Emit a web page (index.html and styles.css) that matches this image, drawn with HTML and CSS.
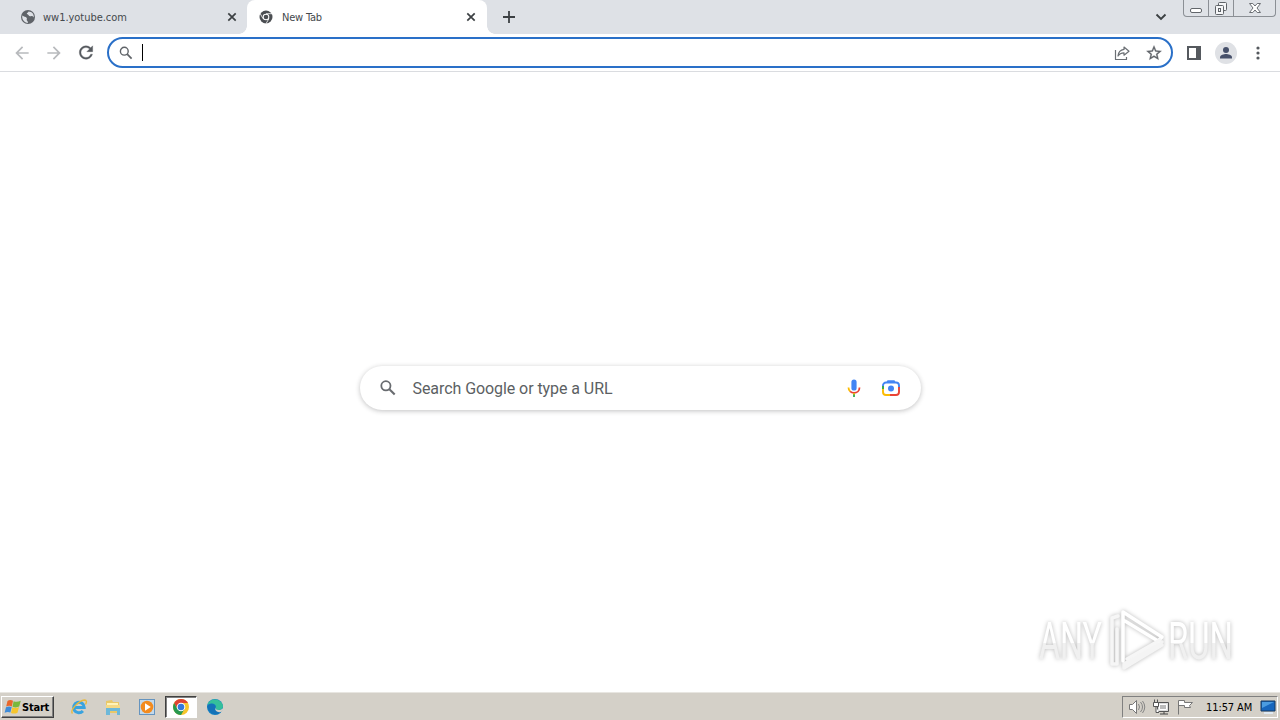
FILE: index.html
```html
<!DOCTYPE html>
<html lang="en">
<head>
    <meta charset="UTF-8">
    <meta name="viewport" content="width=device-width, initial-scale=1.0">
    <title>New Tab</title>
    <link rel="stylesheet" href="styles.css">
</head>
<body>
    <div class="tab-strip">
        <div class="tab">
            <svg class="favicon" width="16" height="16" viewBox="0 0 16 16">
                <circle cx="8" cy="8" r="7" fill="#5f6368"/>
                <path d="M2.3 6.6c1.8 1.5 3.2.8 4.3 2.2.9 1.1-.3 1.7.2 2.5.4.7 1.2.8 1.1 2.6C4.300 13.900 1.600 10.500 2.300 6.600zM8.500 2.400c-.2 1.200-1.700 1.100-1.700 2.200 0 1 1.400.7 1.800 1.700.4.900 1.300 1.300 2.500.9 1-.3 1.600.2 2.600 1.300.5-3.200-1.700-6.100-5.200-6.100z" fill="#dee1e6"/>
            </svg>
            <span class="tab-title tab-site">ww1.yotube.com</span>
            <svg class="tab-close" width="10" height="10" viewBox="0 0 10 10"><path d="M1.300 1.300l7.400 7.400M8.700 1.300l-7.400 7.400" stroke="#3c4043" stroke-width="1.700"/></svg>
        </div>
        <div class="tab active">
            <svg class="favicon" width="16" height="16" viewBox="0 0 16 16">
                <circle cx="8" cy="8" r="6.500" fill="#4b4e52"/>
                <path d="M8 4.700h6M5.100 9.700L2.100 4.500M10.900 9.700l-3 5.200" stroke="#fff" stroke-width=".8"/>
                <circle cx="8" cy="8" r="3.300" fill="#fff"/>
                <circle cx="8" cy="8" r="2.300" fill="#4b4e52"/>
            </svg>
            <span class="tab-title tab-new">New Tab</span>
            <svg class="tab-close" width="10" height="10" viewBox="0 0 10 10"><path d="M1.300 1.300l7.400 7.400M8.700 1.300l-7.400 7.400" stroke="#3c4043" stroke-width="1.700"/></svg>
        </div>
        <svg class="new-tab" width="12" height="12" viewBox="0 0 12 12"><path d="M6 0v12M0 6h12" stroke="#3c4043" stroke-width="1.800"/></svg>
        <svg class="tab-search" width="12" height="8" viewBox="0 0 12 8"><path d="M1.500 1.500L6 6l4.500-4.500" fill="none" stroke="#3c4043" stroke-width="1.900"/></svg>
        <div class="window-buttons">
            <span class="win-btn">
                <svg width="14" height="16" viewBox="0 0 14 16"><rect x="1.500" y="8.500" width="11" height="4" rx="1.500" fill="#fff" stroke="#62666b"/></svg>
            </span>
            <span class="win-btn">
                <svg width="14" height="16" viewBox="0 0 14 16"><g fill="#f5f6f8" stroke="#5f6368"><rect x="4.500" y="2.500" width="8" height="8" rx="1"/><rect x="1.500" y="5.500" width="8" height="9" rx="1"/><rect x="4.500" y="8.500" width="2" height="3"/></g></svg>
            </span>
            <span class="win-btn win-close">
                <svg width="14" height="16" viewBox="0 0 14 16"><path d="M1.500 3.500h3.300L7 6l2.200-2.500h3.300L9 8l3.500 4.500H9.200L7 10l-2.200 2.500H1.500L5 8z" fill="#fff" stroke="#6b6f74"/></svg>
            </span>
        </div>
    </div>

    <div class="toolbar">
        <svg class="nav-btn disabled" width="20" height="20" viewBox="0 0 24 24"><path d="M20 11H7.830l5.590-5.590L12 4l-8 8 8 8 1.410-1.410L7.830 13H20v-2z"/></svg>
        <svg class="nav-btn disabled" width="20" height="20" viewBox="0 0 24 24"><path d="M12 4l-1.410 1.410L16.170 11H4v2h12.170l-5.580 5.590L12 20l8-8z"/></svg>
        <svg class="nav-btn reload" width="20" height="21" viewBox="0 0 24 24"><path d="M17.650 6.350C16.200 4.900 14.210 4 12 4c-4.420 0-7.990 3.580-7.990 8s3.570 8 7.990 8c3.730 0 6.840-2.550 7.730-6h-2.080c-.82 2.330-3.040 4-5.650 4-3.310 0-6-2.690-6-6s2.690-6 6-6c1.660 0 3.140.69 4.220 1.780L13 11h7V4l-2.350 2.350z"/></svg>
        <div class="omnibox">
            <svg width="16" height="16" viewBox="0 0 16 16"><circle cx="6.300" cy="6.200" r="3.900" fill="none" stroke="#5f6368" stroke-width="1.400"/><path d="M9.200 9.100l4.400 4.500" stroke="#5f6368" stroke-width="1.700"/></svg>
            <span class="caret"></span>
            <svg class="share" width="16" height="16" viewBox="0 0 16 16"><path d="M1.500 5v9.500h11V12M10 2l5 4.200-5 4V7.800C7 7.800 5.300 8.700 4 11c.3-3.500 2.300-6.100 6-6.600z" fill="none" stroke="#6b6f74" stroke-width="1.200" stroke-linejoin="round"/></svg>
            <svg width="18" height="18" viewBox="0 0 24 24"><path d="M22 9.240l-7.190-.62L12 2 9.190 8.630 2 9.240l5.460 4.730L5.820 21 12 17.270 18.180 21l-1.630-7.030L22 9.240zM12 15.400l-3.760 2.270 1-4.280-3.320-2.880 4.380-.38L12 6.100l1.710 4.040 4.380.38-3.320 2.880 1 4.280L12 15.400z" fill="#5f6368" stroke="#5f6368" stroke-width=".4"/></svg>
        </div>
        <svg class="side-panel" width="14" height="14" viewBox="0 0 14 14"><path d="M0 0h14v14H0zM2 2v10h7V2z" fill="#55595e" fill-rule="evenodd"/></svg>
        <svg class="avatar" width="22" height="22" viewBox="0 0 22 22"><circle cx="11" cy="11" r="11" fill="#dfe1e5"/><circle cx="11" cy="8" r="3" fill="#46506a"/><path d="M5 16.500v-1.300c0-2 4-3.100 6-3.100s6 1.100 6 3.100v1.300z" fill="#46506a"/></svg>
        <svg class="menu" width="4" height="14" viewBox="0 0 4 14"><g fill="#55595e"><circle cx="2" cy="2" r="1.600"/><circle cx="2" cy="7" r="1.600"/><circle cx="2" cy="12" r="1.600"/></g></svg>
    </div>

    <div class="page">
        <div class="search-box">
            <svg width="20" height="20" viewBox="0 0 20 20"><circle cx="7.900" cy="7.800" r="4.600" fill="none" stroke="#696c70" stroke-width="1.800"/><path d="M11.400 11.300l5.300 5.300" stroke="#696c70" stroke-width="2.100"/></svg>
            <span class="search-text">Search Google or type a URL</span>
            <svg class="mic" width="14" height="20" viewBox="0 0 14 20">
                <rect x="4.400" y="1.500" width="5.200" height="11" rx="2.600" fill="#4285f4"/>
                <path d="M1.500 9.500c0 1.600.6 3 1.600 3.900" fill="none" stroke="#fbbc04" stroke-width="1.800"/>
                <path d="M3.100 13.400c1 1 2.300 1.500 3.900 1.500 3.200 0 5.500-2.100 5.500-5.400" fill="none" stroke="#ea4335" stroke-width="1.800"/>
                <path d="M6.100 15h1.800v4H6.100z" fill="#34a853"/>
                <path d="M6.100 15h1.800v1.400H6.100z" fill="#fbbc04"/>
            </svg>
            <svg class="lens" width="20" height="20" viewBox="0 0 20 20">
                <g fill="none" stroke-width="1.900">
                    <path d="M2 10V7.500A3 3 0 0 1 5 4.500h10a3 3 0 0 1 3 3V10" stroke="#4285f4"/>
                    <path d="M2 9v5a3 3 0 0 0 3 3h5" stroke="#fbbc04"/>
                    <path d="M2 8v3" stroke="#34a853"/>
                    <path d="M9 17h6a3 3 0 0 0 3-3V9" stroke="#ea4335"/>
                </g>
                <path d="M6.500 2.200h7l1.200 2.400H5.300z" fill="#4285f4"/>
                <circle cx="10" cy="10.500" r="3" fill="#4285f4"/>
            </svg>
        </div>

        <svg class="watermark" width="220" height="80" viewBox="0 0 220 80">
            <defs>
                <linearGradient id="fade" x1="0" y1="0" x2="0" y2="1">
                    <stop offset="0.520" stop-color="#fff"/>
                    <stop offset="0.520" stop-color="#f0f0f0"/>
                </linearGradient>
            </defs>
            <g class="watermark-text" fill="url(#fade)">
                <text x="9" y="60" textLength="63" lengthAdjust="spacingAndGlyphs">ANY</text>
                <text x="138" y="60" textLength="65" lengthAdjust="spacingAndGlyphs">RUN</text>
            </g>
            <g fill="none" stroke-width="3.500" stroke-linejoin="round" stroke-linecap="round">
                <path d="M88 17l-6 2v46h5V30" stroke="#f6f6f6"/>
                <path d="M132 43L94 65v4l38-23" stroke="#f4f4f4"/>
                <path d="M93 62V13l39 25-4 4-33-20" stroke="#fff"/>
                <path d="M97 60l33-19" stroke="#f6f6f6"/>
            </g>
        </svg>
    </div>

    <div class="taskbar">
        <div class="start">
            <svg width="18" height="16" viewBox="0 0 18 16">
                <path d="M3.500 2Q6 .3 9 1.800L7.900 7.400Q5 6.100 2.200 7.600z" fill="#e9672b"/>
                <path d="M9.600 2.200Q13 3.500 16.800 1.700L15.200 7.600Q12 9.200 8.500 7.700z" fill="#79b83c"/>
                <path d="M2 8.200Q5 6.700 7.700 8L6.400 13.500Q3.500 12.300.6 13.800z" fill="#3e8bd8"/>
                <path d="M8.300 8.300Q12 9.600 15 8L13.500 13.700Q10.500 15.300 7 13.900z" fill="#f6c52c"/>
            </svg>
            <span>Start</span>
        </div>
        <div class="quick-launch">
            <span class="task">
                <svg width="18" height="18" viewBox="0 0 18 18"><path d="M4.500 9.500h9.700A5.300 5.300 0 1 0 12.900 13" fill="none" stroke="#39a3df" stroke-width="3"/><path d="M2.500 15.500C-.5 12 9 2.500 14.500 2c2.500 0 2.200 2.500 1 4.500" fill="none" stroke="#e9b93d" stroke-width="1.400"/></svg>
            </span>
            <span class="task">
                <svg width="18" height="18" viewBox="0 0 18 18"><path d="M2 3l6-1 1 2h6v11H2z" fill="#e9c868"/><path d="M3 5h11v6H3z" fill="#fff3b8"/><path d="M2 9h14v8h-3v-4H6v4H2z" fill="#6db8d9"/><path d="M2 7h14v3H2z" fill="#f5d985"/></svg>
            </span>
            <span class="task">
                <svg width="18" height="18" viewBox="0 0 18 18"><rect x="1.500" y="1.500" width="15" height="15" fill="#c3d9eb" stroke="#6594bf"/><circle cx="9" cy="9" r="6.300" fill="#f38b1e"/><path d="M7 5.200L12.800 9 7 12.800z" fill="#fff"/></svg>
            </span>
            <span class="task pressed">
                <svg width="18" height="18" viewBox="0 0 18 18"><circle cx="9" cy="9" r="8" fill="#f7c52c"/><path d="M2.100 5A8 8 0 0 1 16 5H9L5.500 11z" fill="#df4334"/><path d="M2.100 5A8 8 0 0 0 9 17l3.500-6H5.500z" fill="#27984f"/><circle cx="9" cy="9" r="4.300" fill="#fff"/><circle cx="9" cy="9" r="3.300" fill="#3478dc"/></svg>
            </span>
            <span class="task">
                <svg width="18" height="18" viewBox="0 0 18 18"><circle cx="9" cy="9" r="8" fill="#1582c4"/><path d="M1.500 7C3-.5 14.500-.3 16.800 7c.8 3-1.500 5.200-4.800 5-2 0-3-1-2.300-2.200C11 7 7 3.700 1.500 7z" fill="#35bf9b"/><path d="M1.200 8C5 3.800 10 6 9.500 9.500 8 11 9.800 14 15.500 13 12 18.500 3 17.500 1.200 8z" fill="#1472b8"/><path d="M9.700 9.300c-.7 1.600.8 2.900 3.100 2.800 1.700 0 3.200-.6 3.800-1.500l1 1-2 2.200c-4 1.300-7.500-1-5.900-4.500z" fill="#d4d0c8"/></svg>
            </span>
        </div>
        <div class="tray">
            <svg width="18" height="18" viewBox="0 0 18 18"><path d="M1.500 6.500h3l4-4v13l-4-4h-3z" fill="#fff" stroke="#777"/><path d="M10.500 6q2 3 0 6M12.500 4q4 5 0 10M14.500 3q4.500 6 0 12" fill="none" stroke="#858585"/></svg>
            <svg width="18" height="18" viewBox="0 0 18 18"><path d="M5.500 4.500h11v9h-11z" fill="#dedede" stroke="#555"/><path d="M7.500 6.500h7v5h-7z" fill="#bbb" stroke="#fff"/><path d="M8 16h8M12 14v2" stroke="#444"/><path d="M1.500 4.500h5v4h-5zM2.500 1.500v3M5.500 1.500v3M4 8.500v6h3" fill="#fff" stroke="#555"/></svg>
            <svg width="18" height="18" viewBox="0 0 18 18"><path d="M2.500 2.500v14M2.500 2.500h6v2h8l-3 3 1 2h-6v-2h-6" fill="#fff" stroke="#777"/></svg>
            <span class="clock">11:57 AM</span>
            <svg class="desktop" width="18" height="16" viewBox="0 0 18 16"><path d="M2 2h14v10H2z" fill="#1766bd" stroke="#17395f"/><path d="M3 3h12L3 9z" fill="#4b9ce1"/><path d="M5 14h9" stroke="#dfe9f2" stroke-width="2"/></svg>
        </div>
    </div>
</body>
</html>
```
FILE: styles.css
```css
* {
    margin: 0;
    padding: 0;
    box-sizing: border-box;
}

body {
    font-family: 'DejaVu Sans Condensed', 'DejaVu Sans', sans-serif;
    background: #fff;
    height: 100vh;
    display: flex;
    flex-direction: column;
    overflow: hidden;
}

svg {
    display: block;
    flex-shrink: 0;
}

/* Tabs */
.tab-strip {
    display: flex;
    align-items: center;
    height: 34px;
    background: #dee1e6;
    flex-shrink: 0;
}

.tab {
    display: flex;
    align-items: center;
    width: 247px;
    height: 34px;
    padding: 0 10px 0 20px;
    font-size: 11px;
    color: #45494d;
}

.tab.active {
    position: relative;
    width: 240px;
    padding: 0 11px;
    background: #fff;
    border-radius: 8px 8px 0 0;
}

.tab.active::before,
.tab.active::after {
    content: '';
    position: absolute;
    bottom: 0;
    width: 8px;
    height: 8px;
}

.tab.active::before {
    left: -8px;
    background: radial-gradient(circle at 0 0, transparent 7.5px, #fff 8px);
}

.tab.active::after {
    right: -8px;
    background: radial-gradient(circle at 100% 0, transparent 7.5px, #fff 8px);
}

.tab-title {
    margin-left: 7px;
    white-space: nowrap;
}

.tab-site {
    letter-spacing: -0.03px;
}

.tab-new {
    margin-left: 8px;
    letter-spacing: -0.2px;
}

.tab-close {
    margin-left: auto;
}

.new-tab {
    margin-left: 16px;
}

.tab-search {
    margin-left: auto;
    margin-right: 16px;
}

.window-buttons {
    display: flex;
    align-self: flex-start;
    width: 93px;
    height: 17px;
    margin-right: 4px;
    border: 1px solid #8b8f95;
    border-top: none;
    border-radius: 0 0 4px 4px;
    background: #dfe2e7;
}

.win-btn {
    display: flex;
    justify-content: center;
    width: 25px;
    border-right: 1px solid #8b8f95;
}

.win-close {
    flex: 1;
    border-right: none;
}

/* Toolbar */
.toolbar {
    display: flex;
    align-items: center;
    height: 38px;
    padding: 0 20px 0 12px;
    border-bottom: 1px solid #dadce0;
    flex-shrink: 0;
}

.nav-btn {
    margin-right: 12px;
    fill: #55595e;
}

.nav-btn.disabled {
    fill: #b8babd;
}

.nav-btn.reload {
    stroke: #55595e;
    stroke-width: 0.4px;
}

.omnibox {
    display: flex;
    align-items: center;
    flex: 1;
    height: 31px;
    margin-left: -1px;
    padding: 0 8px 0 9px;
    border: 2px solid #2a70c8;
    border-radius: 16px;
}

.caret {
    width: 1px;
    height: 17px;
    margin-left: 8px;
    background: #000;
}

.share {
    margin-left: auto;
    margin-right: 15px;
}

.side-panel {
    margin-left: 14px;
}

.avatar {
    margin-left: 14px;
}

.menu {
    margin-left: 19px;
}

/* New tab page */
.page {
    position: relative;
    display: flex;
    justify-content: center;
    flex: 1;
    padding-top: 294px;
}

.search-box {
    display: flex;
    align-items: center;
    width: 561px;
    height: 44px;
    padding: 0 19.5px 0 18px;
    border-radius: 22px;
    box-shadow: 0 1px 5px rgba(32, 33, 36, 0.28);
}

.search-text {
    margin-left: 15px;
    font-family: Roboto, sans-serif;
    font-size: 16px;
    letter-spacing: -0.07px;
    color: #5c5f63;
}

.mic {
    margin-left: auto;
}

.lens {
    margin-left: 20px;
}

.watermark {
    position: absolute;
    right: 30px;
    bottom: 13px;
    overflow: visible;
    filter: drop-shadow(0 0 2px rgba(0, 0, 0, 0.28));
}

.watermark-text {
    font-family: Roboto, sans-serif;
    font-size: 52px;
}

/* Taskbar */
.taskbar {
    display: flex;
    align-items: center;
    height: 28px;
    padding: 1px 2px 0 1px;
    background: #d4d0c8;
    border-top: 1px solid #e8e6e1;
    flex-shrink: 0;
}

.start {
    display: flex;
    align-items: center;
    width: 53px;
    height: 22px;
    padding-left: 2px;
    font-size: 11px;
    font-weight: bold;
    color: #000;
    border: 1px solid;
    border-color: #fff #404040 #404040 #fff;
    box-shadow: inset -1px -1px 0 #808080;
}

.start span {
    letter-spacing: -0.2px;
}

.quick-launch {
    display: flex;
    gap: 2px;
    margin-left: 9px;
}

.task {
    display: flex;
    align-items: center;
    justify-content: center;
    width: 32px;
    height: 22px;
}

.task.pressed {
    background: #fff;
    border: 1px solid;
    border-color: #404040 #fff #fff #404040;
    box-shadow: inset 1px 1px 0 #808080;
}

.tray {
    display: flex;
    align-items: center;
    gap: 6px;
    width: 156px;
    height: 22px;
    margin-left: auto;
    padding-left: 5px;
    border: 1px solid;
    border-color: #808080 #fff #fff #808080;
}

.clock {
    width: 47px;
    margin-left: 6px;
    font-size: 11px;
    letter-spacing: -0.1px;
    white-space: nowrap;
    color: #000;
}
```
